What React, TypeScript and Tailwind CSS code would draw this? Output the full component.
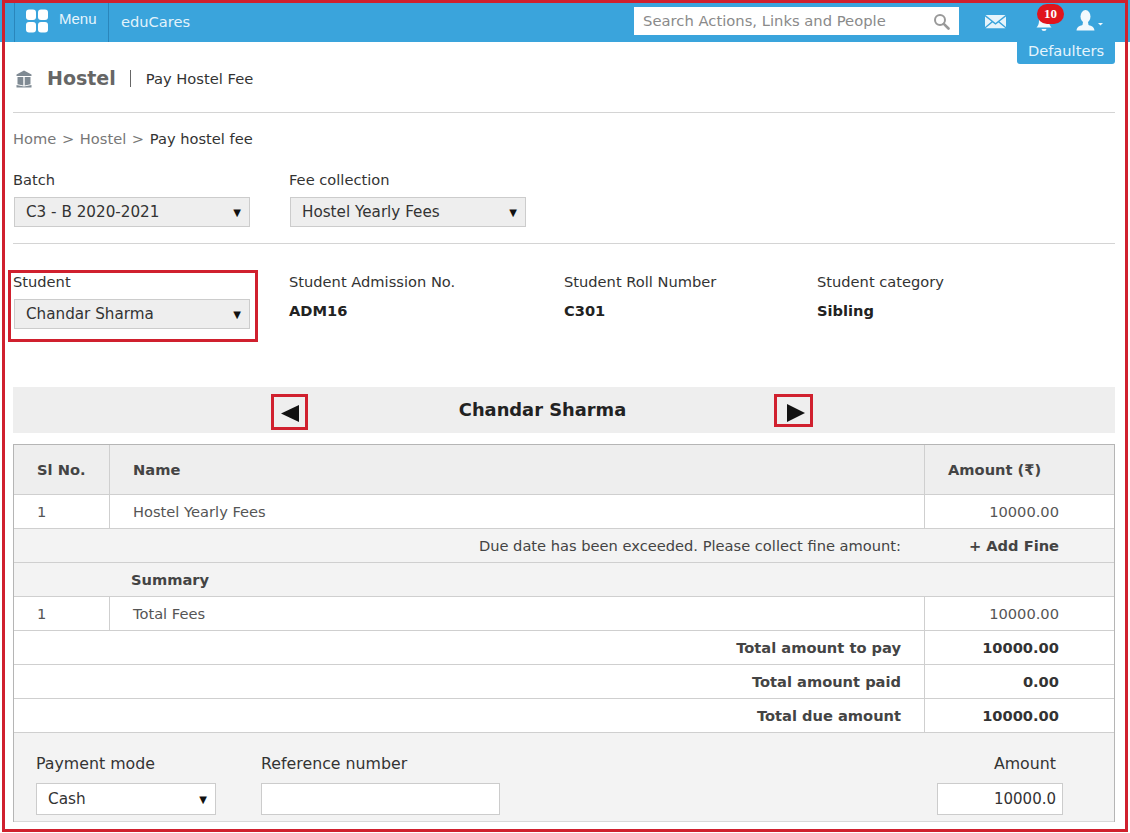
import React from "react";

const F = "font-['DejaVu_Sans',Verdana,sans-serif]";

function Select({ value, w, bg, tall }: { value: string; w: string; bg: string; tall?: boolean }) {
  return (
    <div className={`flex items-center justify-between border border-[#cccccc] pl-[11px] pr-[8px] text-[#333] ${w} ${bg} ${tall ? "h-[32px] text-[15.3px]" : "h-[30px] text-[15.2px]"}`}>
      <span className="pt-[1px]">{value}</span>
      <span className="text-[10px] text-[#111]">▼</span>
    </div>
  );
}

function Info({ label, value, w }: { label: string; value: string; w: string }) {
  return (
    <div className={`${w} shrink-0`}>
      <div className="h-[19px] text-[14.65px] leading-[19px] text-[#333]">{label}</div>
      <div className="mt-[10px] text-[14.65px] font-bold leading-[19px] text-[#222]">{value}</div>
    </div>
  );
}

function TotalRow({ label, value }: { label: string; value: string }) {
  return (
    <div className="flex h-[34px] items-center border-b border-[#cfcfcf] bg-white">
      <div className="w-[910px] pr-[23px] text-right text-[14.65px] font-bold text-[#444]">{label}</div>
      <div className="flex h-full flex-1 items-center justify-end border-l border-[#cfcfcf] pr-[55px] text-[14.65px] font-bold text-[#333]">{value}</div>
    </div>
  );
}

function ItemRow({ no, name, amount }: { no: string; name: string; amount: string }) {
  return (
    <div className="flex h-[34px] items-center border-b border-[#cfcfcf] bg-white text-[14.65px] text-[#555]">
      <div className="flex h-full w-[95px] items-center pl-[23px]">{no}</div>
      <div className="flex h-full w-[815px] items-center border-l border-[#cfcfcf] pl-[23px]">{name}</div>
      <div className="flex h-full flex-1 items-center justify-end border-l border-[#cfcfcf] pr-[55px]">{amount}</div>
    </div>
  );
}

export default function App() {
  return (
    <div className={`relative h-[833px] w-[1130px] overflow-hidden bg-white ${F}`}>
      {/* top bar */}
      <header className="flex h-[42px] items-center bg-[#3aa4dc] pl-[14px] text-white">
        <div className="flex h-full w-[95px] items-center gap-[10px] border-x border-[#2a86bb] pl-[10px]">
          <svg width="24" height="24" viewBox="0 0 24 24" fill="#ffffff">
            <rect x="1" y="0.5" width="10" height="10.5" rx="3" />
            <rect x="13" y="0.5" width="10" height="10.5" rx="3" />
            <rect x="1" y="13" width="10" height="10.5" rx="3" />
            <rect x="13" y="13" width="10" height="10.5" rx="3" />
          </svg>
          <span className="-mt-[3px] font-['Liberation_Sans',sans-serif] text-[15px] text-[#e6f5fc]">Menu</span>
        </div>
        <span className="ml-[12px] mt-[2px] text-[14.65px] text-[#e2f3fb]">eduCares</span>
        <div className="ml-[444px] flex h-[28px] w-[325px] items-center justify-between bg-white pl-[9px] pr-[9px]">
          <span className="text-[14.75px] text-[#8a8a8a]">Search Actions, Links and People</span>
          <svg width="17" height="17" viewBox="0 0 17 17" fill="none" stroke="#999" strokeWidth="2">
            <circle cx="7" cy="7" r="5" />
            <path d="M10.8 10.8 L15.5 15.5" strokeWidth="2.6" strokeLinecap="round" />
          </svg>
        </div>
        <svg className="ml-[26px]" width="21" height="15" viewBox="0 0 21 15" fill="#e6f4fb">
          <path d="M0.5 1 L20.5 1 L10.5 9 Z" />
          <path d="M0 2.5 L6.5 7.6 L0 13 Z M21 2.5 L14.5 7.6 L21 13 Z" />
          <path d="M7.5 8.4 L10.5 10.8 L13.5 8.4 L20.5 14.2 L0.5 14.2 Z" />
        </svg>
        <div className="relative ml-[28px] h-[24px] w-[20px]">
          <svg className="absolute left-0 top-[4px]" width="20" height="20" viewBox="0 0 20 20" fill="#f0f8fc">
            <path d="M10 1 C5.5 1 5 5 5 8 C5 11 4 13 2.5 14.5 L17.5 14.5 C16 13 15 11 15 8 C15 5 14.5 1 10 1 Z" />
            <path d="M7.5 16 H12.5 A2.5 2 0 0 1 7.5 16 Z" />
          </svg>
          <span className="absolute -top-[5px] left-[3px] flex h-[20px] w-[27px] items-center justify-center rounded-full bg-[#e0141c] font-['Liberation_Serif',serif] text-[13px] font-bold text-white">10</span>
        </div>
        <svg className="ml-[21px]" width="30" height="24" viewBox="0 0 30 24" fill="#f2f9fd">
          <ellipse cx="10.5" cy="7.5" rx="5" ry="6.5" />
          <path d="M8 13 H13 L13.5 16 C17 17 19 18 19.5 21.5 H1.5 C2 18 4 17 7.5 16 Z" />
          <path d="M23 14 H28 L25.5 16.5 Z" />
        </svg>
      </header>

      <div className="relative pl-[13px] pr-[15px]">
        {/* floating tab */}
        <div className="absolute right-[15px] top-0 flex h-[22px] w-[98px] items-center justify-center rounded-b-[3px] bg-[#3aa4dc] pb-[5px] text-[14.65px] text-[#e6f5fc]">
          Defaulters
        </div>

        {/* page title */}
        <div className="flex h-[71px] items-center border-b border-[#d4d4d4] pt-[3px]">
          <svg className="ml-[3px]" width="16" height="18" viewBox="0 0 16 18" fill="#7f8a93">
            <path d="M8 0.5 L15.5 4.5 L15.5 6 L0.5 6 L0.5 4.5 Z" />
            <path d="M1.5 7 H7.3 V15.5 L1.5 14.3 Z M8.7 7 H14.5 V14.3 L8.7 15.5 Z" />
            <path d="M0.5 15 L8 16.6 L15.5 15 V17.5 H0.5 Z" />
          </svg>
          <span className="ml-[15px] text-[19px] font-bold text-[#666]">Hostel</span>
          <span className="ml-[14px] h-[17px] w-[1px] bg-[#666]" />
          <span className="ml-[15px] mt-[2px] text-[14.7px] text-[#333]">Pay Hostel Fee</span>
        </div>

        {/* breadcrumb */}
        <div className="mt-[16px] h-[19px] text-[14.65px] leading-[19px] text-[#777] [word-spacing:1px]">
          Home &gt; Hostel &gt; <span className="text-[#333] [word-spacing:0px]">Pay hostel fee</span>
        </div>

        {/* batch row */}
        <div className="mt-[22px] flex h-[74px]">
          <div className="w-[276px] shrink-0">
            <div className="h-[19px] text-[14.65px] leading-[19px] text-[#333]">Batch</div>
            <div className="ml-[1px] mt-[8px]">
              <Select value="C3 - B 2020-2021" w="w-[236px]" bg="bg-[#eeeeee]" />
            </div>
          </div>
          <div>
            <div className="h-[19px] text-[14.65px] leading-[19px] text-[#333]">Fee collection</div>
            <div className="ml-[1px] mt-[8px]">
              <Select value="Hostel Yearly Fees" w="w-[236px]" bg="bg-[#eeeeee]" />
            </div>
          </div>
        </div>
        <div className="-mt-[1px] h-[1px] bg-[#d4d4d4]" />

        {/* student row */}
        <div className="mt-[28px] flex h-[60px]">
          <div className="w-[276px] shrink-0">
            <div className="h-[19px] text-[14.65px] leading-[19px] text-[#333]">Student</div>
            <div className="ml-[1px] mt-[8px]">
              <Select value="Chandar Sharma" w="w-[236px]" bg="bg-[#eeeeee]" />
            </div>
          </div>
          <Info label="Student Admission No." value="ADM16" w="w-[275px]" />
          <Info label="Student Roll Number" value="C301" w="w-[253px]" />
          <Info label="Student category" value="Sibling" w="w-[250px]" />
        </div>

        {/* student band */}
        <div className="relative mt-[55px] flex h-[46px] items-center justify-center bg-[#eeeeee] pr-[43px]">
          <span className="text-[17.85px] font-bold text-[#222]">Chandar Sharma</span>
          <svg className="absolute left-[268px] top-[18px]" width="18" height="17" viewBox="0 0 18 17" fill="#111">
            <path d="M0 8.5 L18 0 V17 Z" />
          </svg>
          <svg className="absolute left-[774px] top-[17px]" width="18" height="18" viewBox="0 0 18 18" fill="#111">
            <path d="M18 9 L0 0 V18 Z" />
          </svg>
        </div>

        {/* table */}
        <div className="mt-[11px] border-x border-t border-[#b5b5b5]">
          <div className="flex h-[50px] items-center border-b border-[#cfcfcf] bg-[#eeeeee] text-[14.65px] font-bold text-[#444]">
            <div className="flex h-full w-[95px] items-center pl-[23px]">Sl No.</div>
            <div className="flex h-full w-[815px] items-center border-l border-[#cfcfcf] pl-[23px]">Name</div>
            <div className="flex h-full flex-1 items-center border-l border-[#cfcfcf] pl-[23px]">Amount (₹)</div>
          </div>
          <ItemRow no="1" name="Hostel Yearly Fees" amount="10000.00" />
          <div className="flex h-[34px] items-center border-b border-[#cfcfcf] bg-[#f3f3f3] text-[14.65px] text-[#444]">
            <div className="w-[910px] pr-[23px] text-right">Due date has been exceeded. Please collect fine amount:</div>
            <div className="flex-1 pr-[55px] text-right font-bold text-[#444]">+ Add Fine</div>
          </div>
          <div className="flex h-[34px] items-center border-b border-[#cfcfcf] bg-[#f3f3f3] pl-[117px] text-[14.65px] font-bold text-[#444]">Summary</div>
          <ItemRow no="1" name="Total Fees" amount="10000.00" />
          <TotalRow label="Total amount to pay" value="10000.00" />
          <TotalRow label="Total amount paid" value="0.00" />
          <TotalRow label="Total due amount" value="10000.00" />
          <div className="flex h-[89px] border-b border-[#d8d8d8] bg-[#f3f3f3] pl-[22px] pr-[51px] pt-[21px]">
            <div className="w-[225px] shrink-0">
              <div className="h-[19px] text-[15.8px] leading-[19px] text-[#333]">Payment mode</div>
              <div className="mt-[10px]">
                <Select value="Cash" w="w-[180px]" bg="bg-white" tall />
              </div>
            </div>
            <div className="flex-1">
              <div className="h-[19px] text-[15.8px] leading-[19px] text-[#333]">Reference number</div>
              <div className="mt-[10px] h-[32px] w-[239px] border border-[#cccccc] bg-white" />
            </div>
            <div className="w-[126px] shrink-0">
              <div className="h-[19px] pr-[7px] text-right text-[15.8px] leading-[19px] text-[#333]">Amount</div>
              <div className="mt-[10px] flex h-[32px] items-center justify-end border border-[#cccccc] bg-white pr-[6px] pt-[1px] text-[15px] text-[#333]">10000.0</div>
            </div>
          </div>
        </div>
      </div>

      {/* screenshot annotation frames */}
      <div className="pointer-events-none absolute inset-x-[2px] bottom-[1px] top-0 border-[3px] border-[#d0202e]" />
      <div className="pointer-events-none absolute left-[8px] top-[270px] h-[72px] w-[250px] border-[3px] border-[#d0202e]" />
      <div className="pointer-events-none absolute left-[271px] top-[394px] h-[36px] w-[37px] border-[3px] border-[#d0202e]" />
      <div className="pointer-events-none absolute left-[774px] top-[394px] h-[33px] w-[39px] border-[3px] border-[#d0202e]" />
    </div>
  );
}
